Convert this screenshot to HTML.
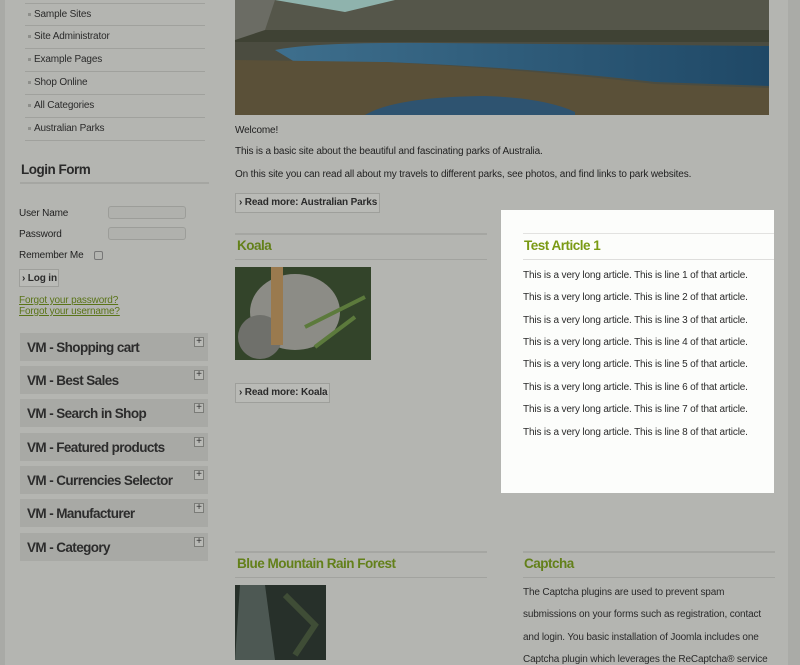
<!DOCTYPE html>
<html><head><meta charset="utf-8"><style>
*{margin:0;padding:0;box-sizing:border-box}
html,body{width:800px;height:665px;overflow:hidden}
body{background:#b4b5b1;font-family:"Liberation Sans",sans-serif;font-size:10px;letter-spacing:-0.15px;color:#222;position:relative;white-space:nowrap}
.a{position:absolute}
.ls{left:0;top:0;width:5px;height:665px;background:#a9aaa6}
.rs{left:788px;top:0;width:12px;height:665px;background:#aaaba7}
.hl{height:2px;background:#a5a6a2}
.mi{left:25px;width:180px;height:1px;background:#a0a19d}
.mt{left:34px;color:#2a2a2a}
.bl{left:28px;width:3px;height:3px;background:#8e8f8b}
.h{font-weight:bold;font-size:13.5px;letter-spacing:-0.5px}
.g{color:#63801a}
.inp{left:108px;width:78px;height:13px;border:1px solid #9c9d99;border-radius:3px;background:#b0b1ad}
.btn{background:#b9bab6;border:1px solid #9e9f9b;font-weight:bold;color:#2b2b2b;line-height:18px}
.vm{left:20px;width:188px;height:28px;background:#a8a9a5;font-weight:bold;font-size:13.5px;letter-spacing:-0.6px;color:#2c2c2c;padding-left:7px;line-height:29px}
.pl{position:absolute;right:4px;top:4px;width:10px;height:10px;border:1px solid #7b7c78;background:#b8b9b5;font-size:10px;line-height:8px;text-align:center;font-weight:normal;color:#333;letter-spacing:0}
p.t{position:absolute;left:523px;color:#2a2a2a}
</style></head><body>
<div class="a ls"></div><div class="a rs"></div>
<div class="a mi" style="top:3px"></div>
<div class="a bl" style="top:13px"></div><div class="a mt" style="top:9px">Sample Sites</div>
<div class="a mi" style="top:25px"></div>
<div class="a bl" style="top:35px"></div><div class="a mt" style="top:31px">Site Administrator</div>
<div class="a mi" style="top:48px"></div>
<div class="a bl" style="top:58px"></div><div class="a mt" style="top:54px">Example Pages</div>
<div class="a mi" style="top:71px"></div>
<div class="a bl" style="top:81px"></div><div class="a mt" style="top:77px">Shop Online</div>
<div class="a mi" style="top:94px"></div>
<div class="a bl" style="top:104px"></div><div class="a mt" style="top:100px">All Categories</div>
<div class="a mi" style="top:117px"></div>
<div class="a bl" style="top:127px"></div><div class="a mt" style="top:123px">Australian Parks</div>
<div class="a mi" style="top:140px"></div>
<div class="a h" style="left:21px;top:162px;color:#2a2a2a">Login Form</div>
<div class="a hl" style="left:20px;top:182px;width:189px"></div>
<div class="a" style="left:19px;top:208px">User Name</div><div class="a inp" style="top:206px"></div>
<div class="a" style="left:19px;top:229px">Password</div><div class="a inp" style="top:227px"></div>
<div class="a" style="left:19px;top:250px">Remember Me</div>
<div class="a" style="left:94px;top:251px;width:9px;height:9px;border:1px solid #777;border-radius:2px"></div>
<div class="a btn" style="left:19px;top:269px;width:40px;height:18px;padding-left:2px">› Log in</div>
<div class="a g" style="left:19px;top:295px;text-decoration:underline;color:#5a7418">Forgot your password?</div>
<div class="a g" style="left:19px;top:306px;text-decoration:underline;color:#5a7418">Forgot your username?</div>
<div class="a vm" style="top:333px">VM - Shopping cart<span class="pl">+</span></div>
<div class="a vm" style="top:366px">VM - Best Sales<span class="pl">+</span></div>
<div class="a vm" style="top:399px">VM - Search in Shop<span class="pl">+</span></div>
<div class="a vm" style="top:433px">VM - Featured products<span class="pl">+</span></div>
<div class="a vm" style="top:466px">VM - Currencies Selector<span class="pl">+</span></div>
<div class="a vm" style="top:499px">VM - Manufacturer<span class="pl">+</span></div>
<div class="a vm" style="top:533px">VM - Category<span class="pl">+</span></div>
<div class="a" style="left:235px;top:0;width:534px;height:115px;overflow:hidden;background:#4a4a3c">
<svg width="534" height="115"><defs><linearGradient id="w" x1="0" x2="1"><stop offset="0" stop-color="#3e6f8d"/><stop offset="1" stop-color="#1f4866"/></linearGradient></defs>
<rect width="534" height="115" fill="#4b4c40"/>
<path d="M0 0 L534 0 L534 40 L300 38 L120 36 L0 30Z" fill="#55564a"/>
<path d="M40 0 L110 12 L160 0Z" fill="#8fb3ad"/>
<rect x="0" y="30" width="534" height="12" fill="#3f4234"/>
<path d="M40 50 Q80 42 200 43 L534 46 L534 86 L420 82 Q300 68 150 62 L60 62Z" fill="url(#w)"/>
<path d="M0 60 L150 62 Q300 70 420 84 L534 88 L534 115 L0 115Z" fill="#5a5038"/>
<path d="M130 115 Q160 97 250 96 Q310 98 340 112 L340 115Z" fill="#2e5370"/>
<path d="M0 0 L40 0 L30 30 L0 40Z" fill="#6b6c64"/>
</svg></div>
<div class="a" style="left:235px;top:125px">Welcome!</div>
<div class="a" style="left:235px;top:146px">This is a basic site about the beautiful and fascinating parks of Australia.</div>
<div class="a" style="left:235px;top:169px">On this site you can read all about my travels to different parks, see photos, and find links to park websites.</div>
<div class="a btn" style="left:235px;top:193px;width:145px;height:20px;padding-left:3px">› Read more: Australian Parks</div>
<div class="a hl" style="left:235px;top:233px;width:252px"></div>
<div class="a h g" style="left:237px;top:238px">Koala</div>
<div class="a" style="left:235px;top:259px;width:252px;height:1px;background:#a2a39f"></div>
<div class="a" style="left:235px;top:267px;width:136px;height:93px;background:#2d3a22;overflow:hidden">
<svg width="136" height="93"><rect width="136" height="93" fill="#33442a"/><ellipse cx="60" cy="45" rx="45" ry="38" fill="#8c8c86"/><ellipse cx="25" cy="70" rx="22" ry="22" fill="#6f706b"/><rect x="36" y="0" width="12" height="78" fill="#9a7a4e"/><path d="M70 60 L130 30 M80 80 L120 50" stroke="#5c7a3c" stroke-width="4"/></svg></div>
<div class="a btn" style="left:235px;top:383px;width:95px;height:20px;padding-left:3px">› Read more: Koala</div>
<div class="a" style="left:501px;top:210px;width:273px;height:283px;background:#fcfdfb"></div>
<div class="a" style="left:523px;top:233px;width:251px;height:1px;background:#e2e2e0"></div>
<div class="a h" style="left:524px;top:238px;color:#7a9a14">Test Article 1</div>
<div class="a" style="left:523px;top:259px;width:251px;height:1px;background:#dededc"></div>
<p class="t" style="top:270px">This is a very long article. This is line 1 of that article.</p>
<p class="t" style="top:292px">This is a very long article. This is line 2 of that article.</p>
<p class="t" style="top:315px">This is a very long article. This is line 3 of that article.</p>
<p class="t" style="top:337px">This is a very long article. This is line 4 of that article.</p>
<p class="t" style="top:359px">This is a very long article. This is line 5 of that article.</p>
<p class="t" style="top:382px">This is a very long article. This is line 6 of that article.</p>
<p class="t" style="top:404px">This is a very long article. This is line 7 of that article.</p>
<p class="t" style="top:427px">This is a very long article. This is line 8 of that article.</p>
<div class="a hl" style="left:235px;top:551px;width:252px"></div>
<div class="a h g" style="left:237px;top:556px">Blue Mountain Rain Forest</div>
<div class="a" style="left:235px;top:577px;width:252px;height:1px;background:#a2a39f"></div>
<div class="a" style="left:235px;top:585px;width:91px;height:75px;background:#2f3a2e"><svg width="91" height="75"><rect width="91" height="75" fill="#27302a"/><path d="M5 0 L30 0 L40 75 L0 75Z" fill="#4d5853"/><path d="M50 10 L80 40 L60 70" stroke="#3f4d36" stroke-width="6" fill="none"/></svg></div>
<div class="a hl" style="left:523px;top:551px;width:252px"></div>
<div class="a h g" style="left:524px;top:556px">Captcha</div>
<div class="a" style="left:523px;top:577px;width:252px;height:1px;background:#a2a39f"></div>
<div class="a" style="left:523px;top:582px;width:260px;height:83px;overflow:hidden"><div style="padding-top:0;line-height:22.4px;color:#2a2a2a">The Captcha plugins are used to prevent spam<br>submissions on your forms such as registration, contact<br>and login. You basic installation of Joomla includes one<br>Captcha plugin which leverages the ReCaptcha® service<br>but you may install other plugins connecting to different</div></div>
</body></html>
